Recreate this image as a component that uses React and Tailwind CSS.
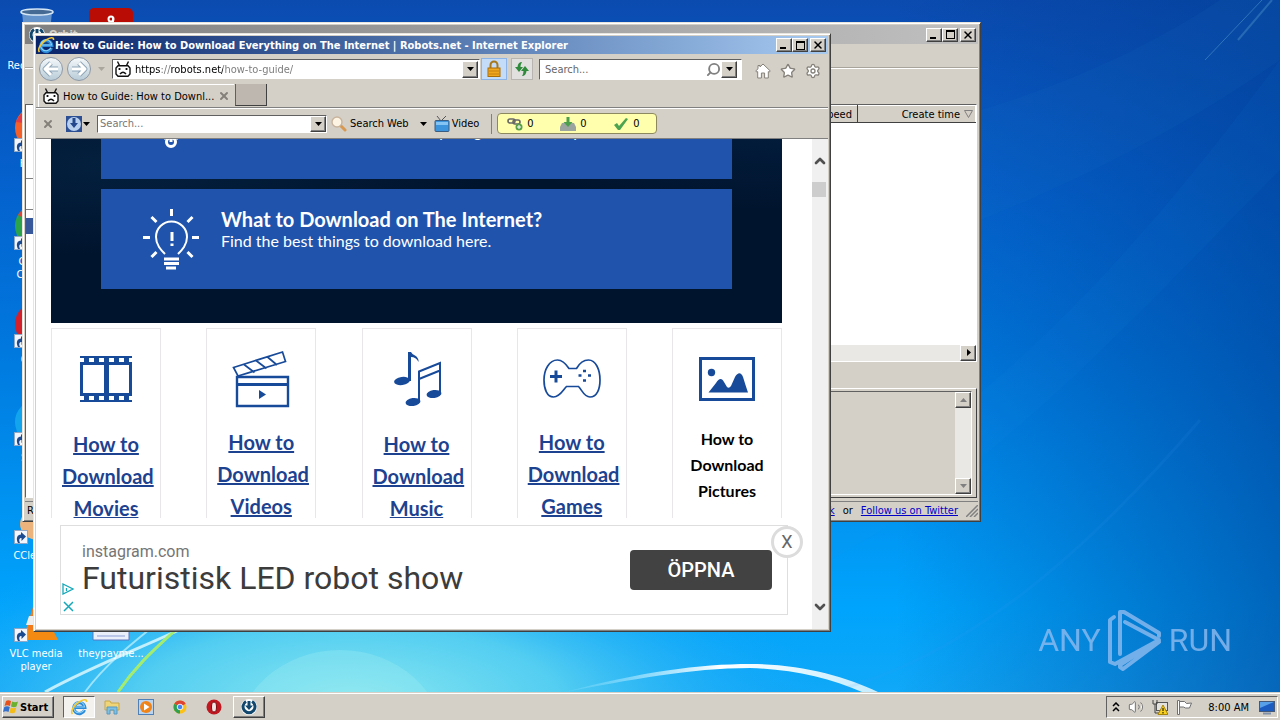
import { Star, Settings, Search, ChevronUp, ChevronDown, X, Volume2 } from 'lucide-react';

const RAISED = 'border border-t-white border-l-white border-r-[#404040] border-b-[#404040] bg-[#d4d0c8] shadow-[inset_-1px_-1px_0_#808080]';
const SUNKEN = 'border border-t-[#606060] border-l-[#606060] border-r-white border-b-white';
const FRAME = 'border border-t-[#e8e5df] border-l-[#e8e5df] border-r-[#404040] border-b-[#404040] bg-[#d4d0c8] p-[2px] shadow-[inset_1px_1px_0_#ffffff,inset_-1px_-1px_0_#808080]';

const DESKTOP_ICONS = [
    { id: 'bin', label: 'Recycle Bin', shortcut: false },
    { id: 'firefox', label: 'Firefox', shortcut: true },
    { id: 'chrome', label: 'Google Chrome', shortcut: true },
    { id: 'opera', label: 'Opera', shortcut: true },
    { id: 'skype', label: 'Skype', shortcut: true },
    { id: 'ccleaner', label: 'CCleaner', shortcut: true },
    { id: 'vlc', label: 'VLC media player', shortcut: true },
];

const GUIDES = [
    { id: 'movies', title: 'How to Download Movies', tall: true, Icon: MoviesIcon },
    { id: 'videos', title: 'How to Download Videos', Icon: VideosIcon },
    { id: 'music', title: 'How to Download Music', tall: true, Icon: MusicIcon },
    { id: 'games', title: 'How to Download Games', Icon: GamesIcon },
    { id: 'pictures', title: 'How to Download Pictures', plain: true, Icon: PicturesIcon },
];

export default function App() {
    return (
        <div className="flex h-screen w-full flex-col overflow-hidden text-[11px] leading-[13px] text-black [font-family:'DejaVu_Sans_Condensed','DejaVu_Sans',sans-serif]">
            <main className="relative min-h-0 flex-1 overflow-hidden bg-[linear-gradient(90deg,transparent_70%,#003c9199_100%),linear-gradient(180deg,#0b4bb0_0%,#0560cc_25%,#0078de_50%,#0092f0_72%,#00a4fc_88%,#10a8f8_100%)]">
                <Wallpaper />
                <div className="relative grid w-[150px] grid-flow-col grid-cols-[72px_78px] grid-rows-[repeat(7,98px)] pt-[6px]">
                    {DESKTOP_ICONS.map(icon => <DesktopIcon key={icon.id} {...icon} />)}
                    <DesktopIcon id="acrobat" label="Acrobat" />
                    <div className="row-start-7">
                        <DesktopIcon id="doc" label="theypayme..." />
                    </div>
                </div>
                <Watermark />
                <OrbitWindow />
                <ExplorerWindow />
            </main>
            <Taskbar />
        </div>
    );
}

function Wallpaper() {
    return (
        <svg className="absolute inset-0 h-full w-full" viewBox="0 0 1280 692" preserveAspectRatio="none" aria-hidden="true">
            <defs>
                <radialGradient id="glow">
                    <stop offset="0" stopColor="#8be8f0" />
                    <stop offset="0.45" stopColor="#5fd4f0" stopOpacity="0.85" />
                    <stop offset="1" stopColor="#18a4f8" stopOpacity="0" />
                </radialGradient>
                <linearGradient id="arc">
                    <stop offset="0" stopColor="#8fe0ff" stopOpacity="0.2" />
                    <stop offset="0.5" stopColor="#fff" />
                    <stop offset="1" stopColor="#d8f4ff" stopOpacity="0.9" />
                </linearGradient>
            </defs>
            <ellipse cx="350" cy="700" rx="470" ry="170" fill="url(#glow)" />
            <ellipse cx="340" cy="745" rx="105" ry="95" fill="#9cecf2" opacity="0.35" />
            <path d="M45 692C100 662 150 645 200 620" stroke="#e6fbff" strokeWidth="3" opacity="0.8" fill="none" />
            <path d="M85 692C105 665 130 645 155 625" stroke="#c8f4ff" strokeWidth="2" opacity="0.7" fill="none" />
            <path d="M118 692C140 660 160 645 184 622" stroke="#a4ec70" strokeWidth="3" fill="none" />
            <path d="M565 692C640 672 700 664 750 664C800 664 845 676 878 692L862 692C830 678 790 669 750 668C690 668 630 680 565 692Z" fill="url(#arc)" />
            <path d="M830 560C1000 470 1150 300 1280 170V60C1140 250 1000 400 830 500Z" fill="#2a92f0" opacity="0.06" />
            <path d="M830 692C960 660 1080 560 1200 420" stroke="#3da0f4" strokeWidth="3" opacity="0.1" fill="none" />
            <path d="M981 110C1080 80 1160 40 1220 0H1280V60C1180 130 1080 180 981 220Z" fill="#1c78c8" opacity="0.1" />
            <path d="M1205 60L1262 0" stroke="#6db4dc" strokeWidth="1" opacity="0.4" />
            <path d="M1238 40L1272 0" stroke="#6db4dc" strokeWidth="2" opacity="0.3" />
        </svg>
    );
}

function DesktopIcon({ id, label, shortcut }) {
    return (
        <div className="flex flex-col items-center gap-[5px] text-center text-white">
            <div className="relative h-12 w-12">
                <svg viewBox="0 0 48 48" className="h-full w-full" aria-hidden="true">
                    {id === 'bin' && <><path d="M10 6H40L36 46H14Z" fill="#7aa4d0" fillOpacity="0.8" /><ellipse cx="25" cy="6" rx="16" ry="3" fill="#456a94" stroke="#d5e6f5" strokeWidth="1.5" /></>}
                    {id === 'acrobat' && <><rect x="2" y="2" width="44" height="44" rx="5" fill="#b90c05" /><circle cx="24" cy="13" r="2.5" fill="none" stroke="#fff" strokeWidth="2" /><path d="M26 12V20" stroke="#fff" strokeWidth="2" /></>}
                    {id === 'firefox' && <><circle cx="25" cy="24" r="22" fill="#f4602a" /><path d="M4 18Q12 0 30 4L20 20Z" fill="#e23a48" /></>}
                    {id === 'chrome' && <><circle cx="25" cy="24" r="22" fill="#2ba24c" /><path d="M6 13A22 22 0 0 1 44 13L25 24Z" fill="#db4437" /></>}
                    {id === 'opera' && <circle cx="25" cy="24" r="22" fill="#d3202b" />}
                    {id === 'skype' && <circle cx="25" cy="24" r="22" fill="#12a5ee" />}
                    {id === 'ccleaner' && <ellipse cx="26" cy="28" rx="18" ry="16" fill="#ecb47c" />}
                    {id === 'vlc' && <><path d="M25 0L38 42H12Z" fill="#f07a1c" /><path d="M17 22H33L36 31H14Z" fill="#eee" /><path d="M8 36H41L46 46H5Z" fill="#f58a12" /></>}
                    {id === 'doc' && <path d="M6 2H42V46H6Z" fill="#eaf0fb" stroke="#5c76c0" />}
                    {id === 'doc' && <path d="M10 32H38M10 37H38M10 42H38" stroke="#8b9bd8" />}
                </svg>
                {shortcut && (
                    <svg viewBox="0 0 14 14" className="absolute bottom-0 left-[2px] h-[14px] w-[14px]" aria-hidden="true">
                        <rect x="0.5" y="0.5" width="13" height="13" fill="#f2f6fc" stroke="#8fa8c8" />
                        <path d="M4 13C1.5 8 3.5 4.5 7 4.5V2L12 6.5L7.5 11V8C5.5 8 4.5 9.5 6 13Z" fill="#1c4a90" />
                    </svg>
                )}
            </div>
            <span className="max-w-[72px]">{label}</span>
        </div>
    );
}

function Watermark() {
    return (
        <div className="absolute right-[48px] bottom-5 flex items-center gap-[6px] text-[32px] leading-[64px] text-[#8fbcf0] opacity-80 [font-family:'Roboto',sans-serif]">
            <span>ANY</span>
            <svg viewBox="0 0 56 64" className="h-16 w-14" fill="none" stroke="#8fbcf0" strokeWidth="4" strokeLinejoin="round" strokeLinecap="round" aria-hidden="true">
                <path d="M7 9L3 12V54L8 56L52 32L18 14" />
                <path d="M13 46V4L17 4L52 25V28M52 34L16 61L13 59V57L42 38" />
            </svg>
            <span>RUN</span>
        </div>
    );
}

function CaptionButtons() {
    return (
        <div className="flex h-[14px] text-black">
            <button aria-label="Minimize" className={`flex w-4 items-end justify-center pb-[2px] ${RAISED}`}><span className="mr-[2px] h-[2px] w-[6px] bg-black" /></button>
            <button aria-label="Maximize" className={`flex w-4 items-center justify-center ${RAISED}`}><span className="h-[9px] w-[9px] border border-t-2 border-black" /></button>
            <button aria-label="Close" className={`ml-[2px] flex w-4 items-center justify-center ${RAISED}`}><X className="h-3 w-3" strokeWidth={3} /></button>
        </div>
    );
}

function Arrow({ className = '', dir = 'down' }) {
    const d = { down: 'M0 2H7L3.5 6Z', up: 'M0 6H7L3.5 2Z', right: 'M2 0V7L6 3.5Z' }[dir];
    return <svg viewBox="0 0 7 8" className={`h-2 w-[7px] ${className}`} fill="currentColor" aria-hidden="true"><path d={d} /></svg>;
}

function OrbitLogo({ className }) {
    return (
        <svg viewBox="0 0 16 16" className={className} aria-hidden="true">
            <circle cx="8" cy="8" r="8" fill="#fff" />
            <path d="M5 2.5A6 6 0 1 0 11 2.5" stroke="#12486e" strokeWidth="3" fill="none" />
            <path d="M6.5 2H9.5V6.5H12L8 11L4 6.5H6.5Z" fill="#12486e" />
        </svg>
    );
}

function OrbitWindow() {
    return (
        <section className={`absolute top-[22px] left-[22px] flex h-[500px] w-[959px] flex-col ${FRAME}`}>
            <header className="flex h-[19px] items-center bg-linear-to-r from-[#808080] to-[#c0c0c0] pr-[2px] pl-1 font-bold text-[#d4d0c8]">
                <OrbitLogo className="mr-1 h-4 w-4" />
                <h2 className="flex-1">Orbit</h2>
                <CaptionButtons />
            </header>
            <div className="h-6 border-b border-[#a8a49c]" />
            <div className="h-9 border-t border-white" />
            <div className="flex min-h-0 flex-1 pr-[1px]">
                <div className={`w-[180px] bg-white pt-[73px] ${SUNKEN}`}>
                    <div className="h-8 border-y border-[#808080]" />
                    <div className="mt-2 h-4 bg-[#38589c]" />
                </div>
                <div className="flex flex-1 flex-col">
                    <div className={`flex h-[258px] flex-col bg-white ${SUNKEN}`}>
                        <table className="w-full border-collapse bg-[#d4d0c8]">
                            <thead>
                                <tr className="h-[17px] text-right">
                                    <th scope="col" className="border border-white border-r-[#404040] border-b-[#404040] pr-[5px] font-normal">Speed</th>
                                    <th scope="col" className="w-[118px] border border-white border-b-[#404040] pr-[2px] font-normal">
                                        <span className="flex items-center justify-end gap-1">
                                            Create time
                                            <svg viewBox="0 0 9 8" className="h-2 w-[9px]" fill="none" stroke="#808080" aria-hidden="true"><path d="M0.5 0.5H8.5L4.5 7.5Z" /></svg>
                                        </span>
                                    </th>
                                </tr>
                            </thead>
                        </table>
                        <div className="flex-1" />
                        <div className="flex h-4 justify-end bg-[#eae8e4]">
                            <button aria-label="Scroll right" className={`flex w-4 items-center justify-center ${RAISED}`}><Arrow dir="right" /></button>
                        </div>
                    </div>
                    <div className="h-[26px]" />
                    <div className="flex flex-1 border border-t-white border-r-[#404040] border-b-[#404040] p-[2px] pr-1">
                        <div className={`flex flex-1 justify-end ${SUNKEN}`}>
                            <div className="flex w-4 flex-col justify-between bg-[#eae8e4] text-[#808080]">
                                <button aria-label="Scroll up" className={`flex h-4 items-center justify-center ${RAISED}`}><Arrow dir="up" /></button>
                                <button aria-label="Scroll down" className={`flex h-4 items-center justify-center ${RAISED}`}><Arrow /></button>
                            </div>
                        </div>
                    </div>
                </div>
            </div>
            <footer className="mt-[3px] flex h-[18px] items-center border-t border-[#808080]">
                <span className="flex-1 pl-[2px]">Ready</span>
                <span className="flex items-center gap-2 pr-2">
                    <a href="#facebook" className="text-[#0000c8] underline">Facebook</a>
                    or
                    <a href="#twitter" className="text-[#0000c8] underline">Follow us on Twitter</a>
                </span>
                <svg viewBox="0 0 12 12" className="h-3 w-3" stroke="#808080" strokeWidth="1.5" aria-hidden="true"><path d="M0 12L12 0M4 12L12 4M8 12L12 8" /></svg>
            </footer>
        </section>
    );
}

function ExplorerLogo({ className }) {
    return (
        <svg viewBox="0 0 18 18" className={className} fill="none" aria-hidden="true">
            <path d="M14.5 12A5.5 5.5 0 1 1 14.8 9.4H5" stroke="#2b8ad8" strokeWidth="3.2" />
            <path d="M14 11.8A5.5 5.5 0 1 1 14.6 9H5" stroke="#8fd4fa" strokeWidth="1.1" />
            <path d="M2.5 16C0 13.5 4 7 9 4C13 1.5 17 0.5 16.5 4" stroke="#f4c832" strokeWidth="1.6" />
        </svg>
    );
}

function RobotIcon() {
    return (
        <svg viewBox="0 0 16 16" className="h-4 w-4 shrink-0" fill="none" stroke="#111" strokeWidth="1.4" aria-hidden="true">
            <path d="M3 4.8H13L15 7V13L13 15.2H3L1 13V7Z" fill="#fff" />
            <path d="M4.5 4.5L2.5 0.5M11.5 4.5L13.5 0.5M5 13Q8 9.5 11 13" />
            <path d="M4.5 7V9M11.5 7V9" strokeWidth="1.8" />
        </svg>
    );
}

function ExplorerWindow() {
    return (
        <section className={`absolute top-[33px] left-[33px] flex h-[599px] w-[798px] flex-col ${FRAME}`}>
            <header className="flex h-[18px] items-center bg-linear-to-r from-[#0a246a] to-[#a6caf0] pr-[2px] pl-[1px] font-bold text-white">
                <ExplorerLogo className="h-[18px] w-[18px]" />
                <h1 className="flex-1 truncate">How to Guide: How to Download Everything on The Internet | Robots.net - Internet Explorer</h1>
                <CaptionButtons />
            </header>
            <NavBar />
            <TabStrip />
            <DownloadBar />
            <div className="flex min-h-0 flex-1 bg-white">
                <div className="flex min-w-0 flex-1 flex-col [font-family:'Lato',sans-serif]">
                    <RobotsPage />
                    <AdBanner />
                </div>
                <div className="flex w-4 flex-col items-center bg-[#f0f0f0] pt-[14px] pb-[14px] text-[#505050]">
                    <ChevronUp className="h-4 w-4" strokeWidth={4} />
                    <div className="mt-[13px] h-[15px] w-full border-r-2 border-[#f0f0f0] bg-[#cdcdcd]" />
                    <div className="flex-1" />
                    <ChevronDown className="h-4 w-4" strokeWidth={4} />
                </div>
            </div>
        </section>
    );
}

function RoundButton({ label, flip }) {
    return (
        <button aria-label={label} className="h-6 w-6 rounded-full border border-[#8d99a6] bg-linear-to-b from-[#f4f8fa] to-[#b9ccd8]">
            <svg viewBox="0 0 22 22" className={flip ? 'rotate-180' : ''} fill="none" stroke="#8ea6b8" strokeWidth="5" strokeLinejoin="round" aria-hidden="true">
                <path d="M18 11H6M11 5L5 11L11 17" />
                <path d="M18 11H6M11 5L5 11L11 17" stroke="#fff" strokeWidth="3" />
            </svg>
        </button>
    );
}

function NavBar() {
    return (
        <nav className="flex h-[30px] items-center pr-[7px] pl-[3px]">
            <RoundButton label="Back" />
            <span className="w-1" />
            <RoundButton label="Forward" flip />
            <span className="flex w-[21px] justify-center text-[#aaa69e]"><Arrow /></span>
            <div className={`flex h-5 flex-1 items-center bg-white pr-[1px] pl-[2px] ${SUNKEN}`}>
                <RobotIcon />
                {/* the domain stays black, the rest of the address is greyed */}
                <input
                    aria-label="Address"
                    defaultValue="https://robots.net/how-to-guide/"
                    className="ml-1 min-w-0 flex-1 bg-[linear-gradient(90deg,#000_26px,#777_26px_35px,#000_35px_88px,#777_88px)] bg-clip-text text-transparent outline-none"
                />
                <button aria-label="Show addresses" className={`flex h-[17px] w-4 items-center justify-center ${RAISED}`}><Arrow /></button>
            </div>
            <button aria-label="Security report" className="ml-[1px] flex h-[22px] w-[26px] items-center justify-center border border-[#8cb4e6] bg-[#c4dcf8]">
                <svg viewBox="0 0 16 18" className="h-[18px] w-4" aria-hidden="true">
                    <path d="M4.5 9V5A3.5 3.5 0 0 1 11.5 5V9" stroke="#a87818" strokeWidth="2" fill="none" />
                    <rect x="2" y="8" width="12" height="8.5" fill="#f0a820" stroke="#a86c08" />
                    <path d="M3 11H13M3 14H13" stroke="#c88010" />
                </svg>
            </button>
            <button aria-label="Refresh" className="ml-1 flex h-[22px] w-[22px] items-center justify-center border border-[#b8b4b0] bg-[#e2e0de]">
                <svg viewBox="0 0 16 16" className="h-4 w-4 shrink-0" fill="#2f8a3c" aria-hidden="true">
                    <path d="M8 1Q4 1 3.5 6H1L5 11L9 6H6.5Q6.5 3.5 8 1Z" />
                    <path d="M8 15Q12 15 12.5 10H15L11 5L7 10H9.5Q9.5 12.5 8 15Z" />
                </svg>
            </button>
            <div className={`ml-[6px] flex h-[21px] w-[203px] items-center bg-white pr-1 pl-[5px] ${SUNKEN}`}>
                <input aria-label="Search" placeholder="Search..." className="min-w-0 flex-1 outline-none placeholder:text-[#666]" />
                <Search className="h-[15px] w-[15px] -scale-x-100 text-[#808080]" strokeWidth={3} />
                <button aria-label="Search options" className={`flex h-[17px] w-4 items-center justify-center ${RAISED}`}><Arrow /></button>
            </div>
            <div className="flex items-center gap-[9px] pt-1 pl-[13px] text-[#85817a]">
                <a href="#home" aria-label="Home">
                    <svg viewBox="0 0 16 16" className="h-4 w-4" fill="#fff" stroke="currentColor" aria-hidden="true">
                        <path d="M8 1L15.3 8L14 9.2L13.3 8.6V15H9.6V10H6.4V15H2.7V8.6L2 9.2L0.7 8L3 5.8V2.5H5V3.9Z" />
                    </svg>
                </a>
                <a href="#favorites" aria-label="Favorites"><Star className="h-4 w-4" fill="#fff" strokeWidth={2} /></a>
                <a href="#tools" aria-label="Tools"><Settings className="h-4 w-4" fill="#fff" strokeWidth={2} /></a>
            </div>
        </nav>
    );
}

function TabStrip() {
    return (
        <div className="flex h-6 border-b border-[#808080] pl-[2px]">
            <div className="flex w-[196px] items-center border-t border-l border-white pl-1">
                <RobotIcon />
                <span className="ml-1 flex-1 whitespace-nowrap">How to Guide: How to Downl...</span>
                <button aria-label="Close tab" className="mr-1 text-[#85817a]"><X className="h-3 w-3" strokeWidth={4} /></button>
            </div>
            <button aria-label="New tab" className="ml-[1px] h-[22px] w-8 border border-t-0 border-[#404040] border-l-[#606060] bg-[#bdb7b0]" />
        </div>
    );
}

function DownloadBar() {
    return (
        <div className="flex h-[31px] items-center border-t border-b border-t-white border-b-[#808080] pl-[6px]">
            <button aria-label="Close toolbar" className="text-[#85817a]"><X className="h-3 w-3" strokeWidth={4} /></button>
            <svg viewBox="0 0 16 16" className="ml-3 h-4 w-4" aria-hidden="true">
                <rect width="16" height="16" fill="#2c4f94" />
                <circle cx="8" cy="8" r="7" fill="#b8d0ee" />
                <path d="M6.5 2H9.5V7H12L8 12L4 7H6.5Z" fill="#24468c" />
            </svg>
            <Arrow className="ml-[1px]" />
            <div className={`ml-[7px] flex h-[18px] w-[230px] items-center bg-white pl-[2px] ${SUNKEN}`}>
                <input aria-label="Search downloads" placeholder="Search..." className="min-w-0 flex-1 outline-none placeholder:text-[#777]" />
                <button aria-label="Search history" className={`flex h-4 w-4 items-center justify-center ${RAISED}`}><Arrow /></button>
            </div>
            <button className="ml-1 flex items-center gap-[3px]">
                <svg viewBox="0 0 16 16" className="h-4 w-4" aria-hidden="true">
                    <path d="M9 9L14 14" stroke="#d89850" strokeWidth="3" strokeLinecap="round" />
                    <circle cx="6" cy="6" r="5" fill="#fdf4e4" stroke="#c8b49c" strokeWidth="1.4" />
                </svg>
                Search Web
            </button>
            <Arrow className="ml-[11px]" />
            <button className="ml-[7px] flex items-center gap-[2px]">
                <svg viewBox="0 0 16 16" className="h-4 w-4" aria-hidden="true">
                    <path d="M3 0L7 5L12 0" stroke="#555" fill="none" />
                    <rect x="1" y="4.5" width="14" height="11" rx="1" fill="#3c94dc" stroke="#3a5c80" />
                    <path d="M2 6H14V9H2Z" fill="#84c4f4" />
                </svg>
                Video
            </button>
            <div className="ml-3 h-5 border-l border-[#808080]" />
            <div className="ml-[5px] grid h-[21px] w-40 grid-cols-[53px_53px_1fr] items-center rounded-sm border border-[#8c8860] bg-[#ffffae] pl-[9px]">
                <span className="flex items-center gap-1">
                    <svg viewBox="0 0 16 16" className="h-4 w-4" fill="none" stroke="#686868" strokeWidth="1.6" aria-hidden="true">
                        <rect x="1" y="3" width="7" height="4" rx="2" /><rect x="6" y="4" width="7" height="4" rx="2" />
                        <circle cx="12" cy="11" r="3.5" fill="#58a048" stroke="none" />
                        <path d="M12 9V13M10 11H14" stroke="#fff" strokeWidth="1" />
                    </svg>
                    0
                </span>
                <span className="flex items-center gap-1">
                    <svg viewBox="0 0 16 16" className="h-4 w-4" aria-hidden="true">
                        <path d="M2 7H14L16 11V15H0V11Z" fill="#9ca4a0" />
                        <path d="M6.5 1H9.5V6H12.5L8 11L3.5 6H6.5Z" fill="#4ca04c" />
                    </svg>
                    0
                </span>
                <span className="flex items-center gap-1">
                    <svg viewBox="0 0 16 16" className="h-4 w-4" aria-hidden="true"><path d="M1 9L4 7L6 10L13 2L15 3L7 14H5Z" fill="#4ca450" /></svg>
                    0
                </span>
            </div>
        </div>
    );
}

function HeroPanel({ icon, title, text }) {
    return (
        <article className="flex h-[100px] gap-5 bg-[#2054ac] pt-[18px] pl-10 text-white">
            {icon}
            <div className="pt-[1px]">
                <h3 className="text-xl leading-[22px] font-bold">{title}</h3>
                <p className="text-base leading-[22px]">{text}</p>
            </div>
        </article>
    );
}

function RobotsPage() {
    return (
        <div className="min-h-0 flex-1 overflow-hidden pr-[30px] pl-[15px]">
            <div className="-mt-[60px] flex flex-col gap-[10px] bg-[#01142e] bg-[radial-gradient(ellipse_at_8%_35%,#03203e_0%,transparent_40%),radial-gradient(ellipse_at_100%_20%,#021d3c_0%,transparent_30%)] px-[50px] pb-[34px]">
                <HeroPanel icon={<GearIcon />} title="How to Download Anything?" text="Learn to download and save anything with these tips" />
                <HeroPanel icon={<BulbIcon />} title="What to Download on The Internet?" text="Find the best things to download here." />
            </div>
            <div className="mt-[5px] flex justify-between">
                {GUIDES.map(guide => <GuideCard key={guide.id} {...guide} />)}
            </div>
        </div>
    );
}

function GuideCard({ id, title, tall, plain, Icon }) {
    return (
        <div className="flex h-[240px] w-[110px] flex-col items-center border border-[#e8e6e8] px-[10px] pt-5">
            <div className={tall ? 'mb-[19px]' : 'mb-[17px]'}>
                <Icon />
            </div>
            {plain
                ? <h4 className="w-full text-center text-base leading-[26px] font-bold">{title}</h4>
                : <a href={`#${id}`} className="w-full text-center text-xl leading-8 font-bold text-[#1d4290] underline decoration-2 underline-offset-1">{title}</a>}
        </div>
    );
}

function AdBanner() {
    return (
        <aside className="bg-white px-6 pt-[7px] pb-[14px] [font-family:'Roboto',sans-serif]">
            <div className="relative flex h-[90px] items-center border border-[#dedede] pr-[15px] pl-[1px]">
                <div className="flex flex-col gap-[5px] self-end pb-[2px] text-[#14a8b8]">
                    <svg viewBox="0 0 12 12" className="h-3 w-3" fill="none" stroke="currentColor" strokeWidth="1.3" aria-hidden="true"><path d="M1 1L11 6L1 11ZM4.5 5V8" /></svg>
                    <svg viewBox="0 0 12 12" className="h-3 w-3" stroke="currentColor" strokeWidth="1.5" aria-hidden="true"><path d="M2 2L11 11M11 2L2 11" /></svg>
                </div>
                <div className="flex-1 pb-1 pl-2">
                    <p className="text-base leading-5 text-[#757575]">instagram.com</p>
                    <p className="text-[32px] leading-8 text-[#3c3c3c]">Futuristisk LED robot show</p>
                </div>
                <button className="h-10 w-[142px] rounded-sm bg-[#424242] text-xl font-medium text-white">ÖPPNA</button>
                <button aria-label="Close ad" className="absolute top-0 -right-4 flex h-8 w-8 items-center justify-center rounded-full border-3 border-[#dcdcdc] bg-white text-lg text-[#666]">X</button>
            </div>
        </aside>
    );
}

function GearIcon() {
    return (
        <svg viewBox="0 0 60 64" className="h-16 w-[60px] shrink-0" fill="none" stroke="#fff" strokeWidth="3" aria-hidden="true">
            <circle cx="30" cy="45" r="4.5" />
            <path d="M23 41H37M30 45V36" />
        </svg>
    );
}

function BulbIcon() {
    return (
        <svg viewBox="0 0 60 64" className="h-16 w-[60px] shrink-0" fill="none" stroke="#fff" strokeWidth="3" aria-hidden="true">
            <path d="M24 47C20 43 15 38 15 30A15.5 15.5 0 0 1 46 30C46 38 41 43 37 47" strokeWidth="2" />
            <path d="M30.5 2V9M2 30.5H9M51 30.5H58M10.5 10L15.5 15M51.5 10L46.5 15M10.5 50L15.5 45M51.5 50L46.5 45" />
            <path d="M31 25V34M31 36.5V39" />
            <path d="M23 52H38M23 56.5H38M25 61H35" />
        </svg>
    );
}

function MoviesIcon() {
    return (
        <svg viewBox="0 0 60 60" className="h-[60px] w-[60px]" fill="#184a9a" aria-hidden="true">
            <path d="M4 7H56V9H4ZM4 51H56V53H4ZM4 13H56V47H4ZM7 16V44H28V16ZM33 16V44H53V16Z" fillRule="evenodd" />
            <path d="M8 9H13V13H8ZM18 9H23V13H18ZM28 9H33V13H28ZM38 9H43V13H38ZM48 9H53V13H48ZM8 47H13V51H8ZM18 47H23V51H18ZM28 47H33V51H28ZM38 47H43V51H38ZM48 47H53V51H48Z" />
        </svg>
    );
}

function VideosIcon() {
    return (
        <svg viewBox="0 0 60 60" className="h-[60px] w-[60px]" fill="none" stroke="#184a9a" aria-hidden="true">
            <path d="M2.5 18.5L51.5 3L54.5 12.5L7 27ZM13 15.5L23.5 23.5M25 11.5L35.5 19.5M36.5 8L46 16" strokeWidth="1.7" />
            <path d="M6 28H57V57H6Z" strokeWidth="2.4" />
            <path d="M6 35.5H57" strokeWidth="3" />
            <path d="M28 41L35 45.5L28 50Z" fill="#184a9a" stroke="none" />
        </svg>
    );
}

function MusicIcon() {
    return (
        <svg viewBox="0 0 60 60" className="h-[60px] w-[60px]" fill="#184a9a" aria-hidden="true">
            <path d="M21 3H24Q25 5 28 6.5Q32 9 31.5 13Q29 8 24 8V32H21Z" />
            <ellipse cx="15" cy="32" rx="8" ry="4" transform="rotate(-8 15 32)" />
            <path d="M32 53V22.5L53 14V45M32 30L53 21.5" fill="none" stroke="#184a9a" strokeWidth="2" />
            <ellipse cx="26" cy="53" rx="7.5" ry="4" transform="rotate(-8 26 53)" />
            <ellipse cx="47" cy="45" rx="7.5" ry="4" transform="rotate(-8 47 45)" />
        </svg>
    );
}

function GamesIcon() {
    return (
        <svg viewBox="0 0 60 60" className="h-[60px] w-[60px]" fill="none" stroke="#184a9a" strokeWidth="1.7" aria-hidden="true">
            <path d="M27 19.5H34.5C37 15 41 11 46.5 11C54 11 58 21 58 31C58 40 55 48 48 48C42 48 40 41 36.5 37.5H24.5C21 41 18 48 11.5 48C5 48 2 40 2 31C2 21 7 11 15.5 11C20 11 24 15 27 19.5Z" />
            <path d="M14 21.5V33.5M8 27.5H20" strokeWidth="3" />
            <path d="M41 22H44M36.5 26.5H39.5M46 26.5H49M41 31.5H44" strokeWidth="2.5" />
        </svg>
    );
}

function PicturesIcon() {
    return (
        <svg viewBox="0 0 60 60" className="h-[60px] w-[60px]" fill="#184a9a" aria-hidden="true">
            <path d="M3.5 9.5H56.5V50.5H3.5Z" fill="none" stroke="#184a9a" strokeWidth="3" />
            <circle cx="14.5" cy="23.5" r="3.7" />
            <path d="M11.5 43.5L19 34C22 29 25 29 27 33L30 38Q32 40 34 37L38 28C41 23 44 23 46 28C48 34 49 38 51 43.5Z" />
        </svg>
    );
}

function Taskbar() {
    return (
        <footer className="flex h-7 shrink-0 items-end border-t border-[#d4d0c8] bg-[#d4d0c8] px-[2px] pb-[2px] shadow-[inset_0_1px_0_#ffffff]">
            <button className={`flex h-[22px] w-[52px] items-center gap-[1px] text-[11px] font-bold ${RAISED}`}>
                <svg viewBox="0 0 16 16" className="h-4 w-4 shrink-0" aria-hidden="true">
                    <path d="M3 2Q5 0.5 8 2L7 7Q4 5.5 1.5 7Z" fill="#e8501c" />
                    <path d="M9 2.5Q12 4 15 2.5L13.5 7.5Q11 9 8 7.5Z" fill="#6cb030" />
                    <path d="M1.3 8Q4 6.5 6.8 8L5.5 13Q3 11.5 0 13Z" fill="#3470cc" />
                    <path d="M7.7 8.5Q10.5 10 13.3 8.5L12 13.5Q9.5 15 6.4 13.5Z" fill="#f4bc18" />
                </svg>
                Start
            </button>
            <div className="ml-[9px] flex h-[22px] items-center">
                <button aria-label="Internet Explorer" className={`flex h-[22px] w-8 items-center justify-center bg-[#f4f2ee] ${SUNKEN}`}><ExplorerLogo className="h-[18px] w-[18px]" /></button>
                <button aria-label="Windows Explorer" className="flex w-[34px] justify-center">
                    <svg viewBox="0 0 16 16" className="h-4 w-4" aria-hidden="true"><path d="M1 2H6L7 4H15V11H1Z" fill="#f0d478" stroke="#c8a848" /><path d="M3 8H13V15H10V11H6V15H3Z" fill="#7cc0e4" stroke="#5898c0" /></svg>
                </button>
                <button aria-label="Media Player" className="flex w-[34px] justify-center">
                    <svg viewBox="0 0 16 16" className="h-4 w-4" aria-hidden="true"><rect x="0.5" y="0.5" width="15" height="15" fill="#b8d4f0" stroke="#5080b8" /><circle cx="8" cy="8" r="6" fill="#f08418" /><path d="M6 4.5L11.5 8L6 11.5Z" fill="#fff" /></svg>
                </button>
                <button aria-label="Chrome" className="flex w-[34px] justify-center">
                    <svg viewBox="0 0 16 16" className="h-[14px] w-[14px]" aria-hidden="true"><circle cx="8" cy="8" r="7.5" fill="#fbc116" /><path d="M8 8L1.5 4.3A7.5 7.5 0 0 1 14.5 4.3Z" fill="#dd4434" /><path d="M8 8L1.5 4.3A7.5 7.5 0 0 0 8 15.5Z" fill="#30a050" /><circle cx="8" cy="8" r="3.2" fill="#4484f0" stroke="#fff" /></svg>
                </button>
                <button aria-label="Opera" className="flex w-[34px] justify-center">
                    <svg viewBox="0 0 16 16" className="h-4 w-4" aria-hidden="true"><circle cx="8" cy="8" r="7.5" fill="#c01820" /><ellipse cx="8" cy="8" rx="2.5" ry="5" fill="#f0e8e4" stroke="#7c0c10" /></svg>
                </button>
                <button aria-label="Orbit" className={`ml-[2px] flex h-[22px] w-8 items-center justify-center ${RAISED}`}><OrbitLogo className="h-4 w-4" /></button>
            </div>
            <div className={`ml-auto flex h-[22px] items-center gap-2 pr-[2px] pl-[5px] ${SUNKEN}`}>
                <svg viewBox="0 0 8 10" className="h-[10px] w-2" fill="none" stroke="#000" strokeWidth="1.5" aria-hidden="true"><path d="M1 4L4 1L7 4M1 9L4 6L7 9" /></svg>
                <Volume2 className="h-4 w-4 text-[#707070]" fill="#fff" strokeWidth={1.5} />
                <svg viewBox="0 0 16 16" className="h-4 w-4" aria-hidden="true">
                    <rect x="4.5" y="3.5" width="11" height="8" fill="#e4e2de" stroke="#555" />
                    <path d="M1 1V5H5V1M3 5V14H9" stroke="#444" fill="none" />
                    <path d="M11 6L16 15.5H6Z" fill="#f8d020" stroke="#a88408" /><path d="M11 9V12M11 13V14.5" stroke="#000" />
                </svg>
                <svg viewBox="0 0 16 16" className="h-4 w-4" fill="#fff" stroke="#707070" aria-hidden="true"><path d="M1.5 1.5H3.5V15.5H1.5ZM3.5 2.5H8.5L10.5 4.5L15.5 4L13.5 9H9.5L7.5 8H3.5Z" /></svg>
                <time className="pr-[2px] pl-2">8:00 AM</time>
                <svg viewBox="0 0 16 16" className="h-4 w-4" aria-hidden="true"><rect x="0.5" y="2.5" width="15" height="10" fill="#1c5cc0" stroke="#445878" /><path d="M1 3H15L1 9Z" fill="#58a0e8" /><path d="M4 14.5H12" stroke="#8090a8" strokeWidth="2" /></svg>
            </div>
        </footer>
    );
}
